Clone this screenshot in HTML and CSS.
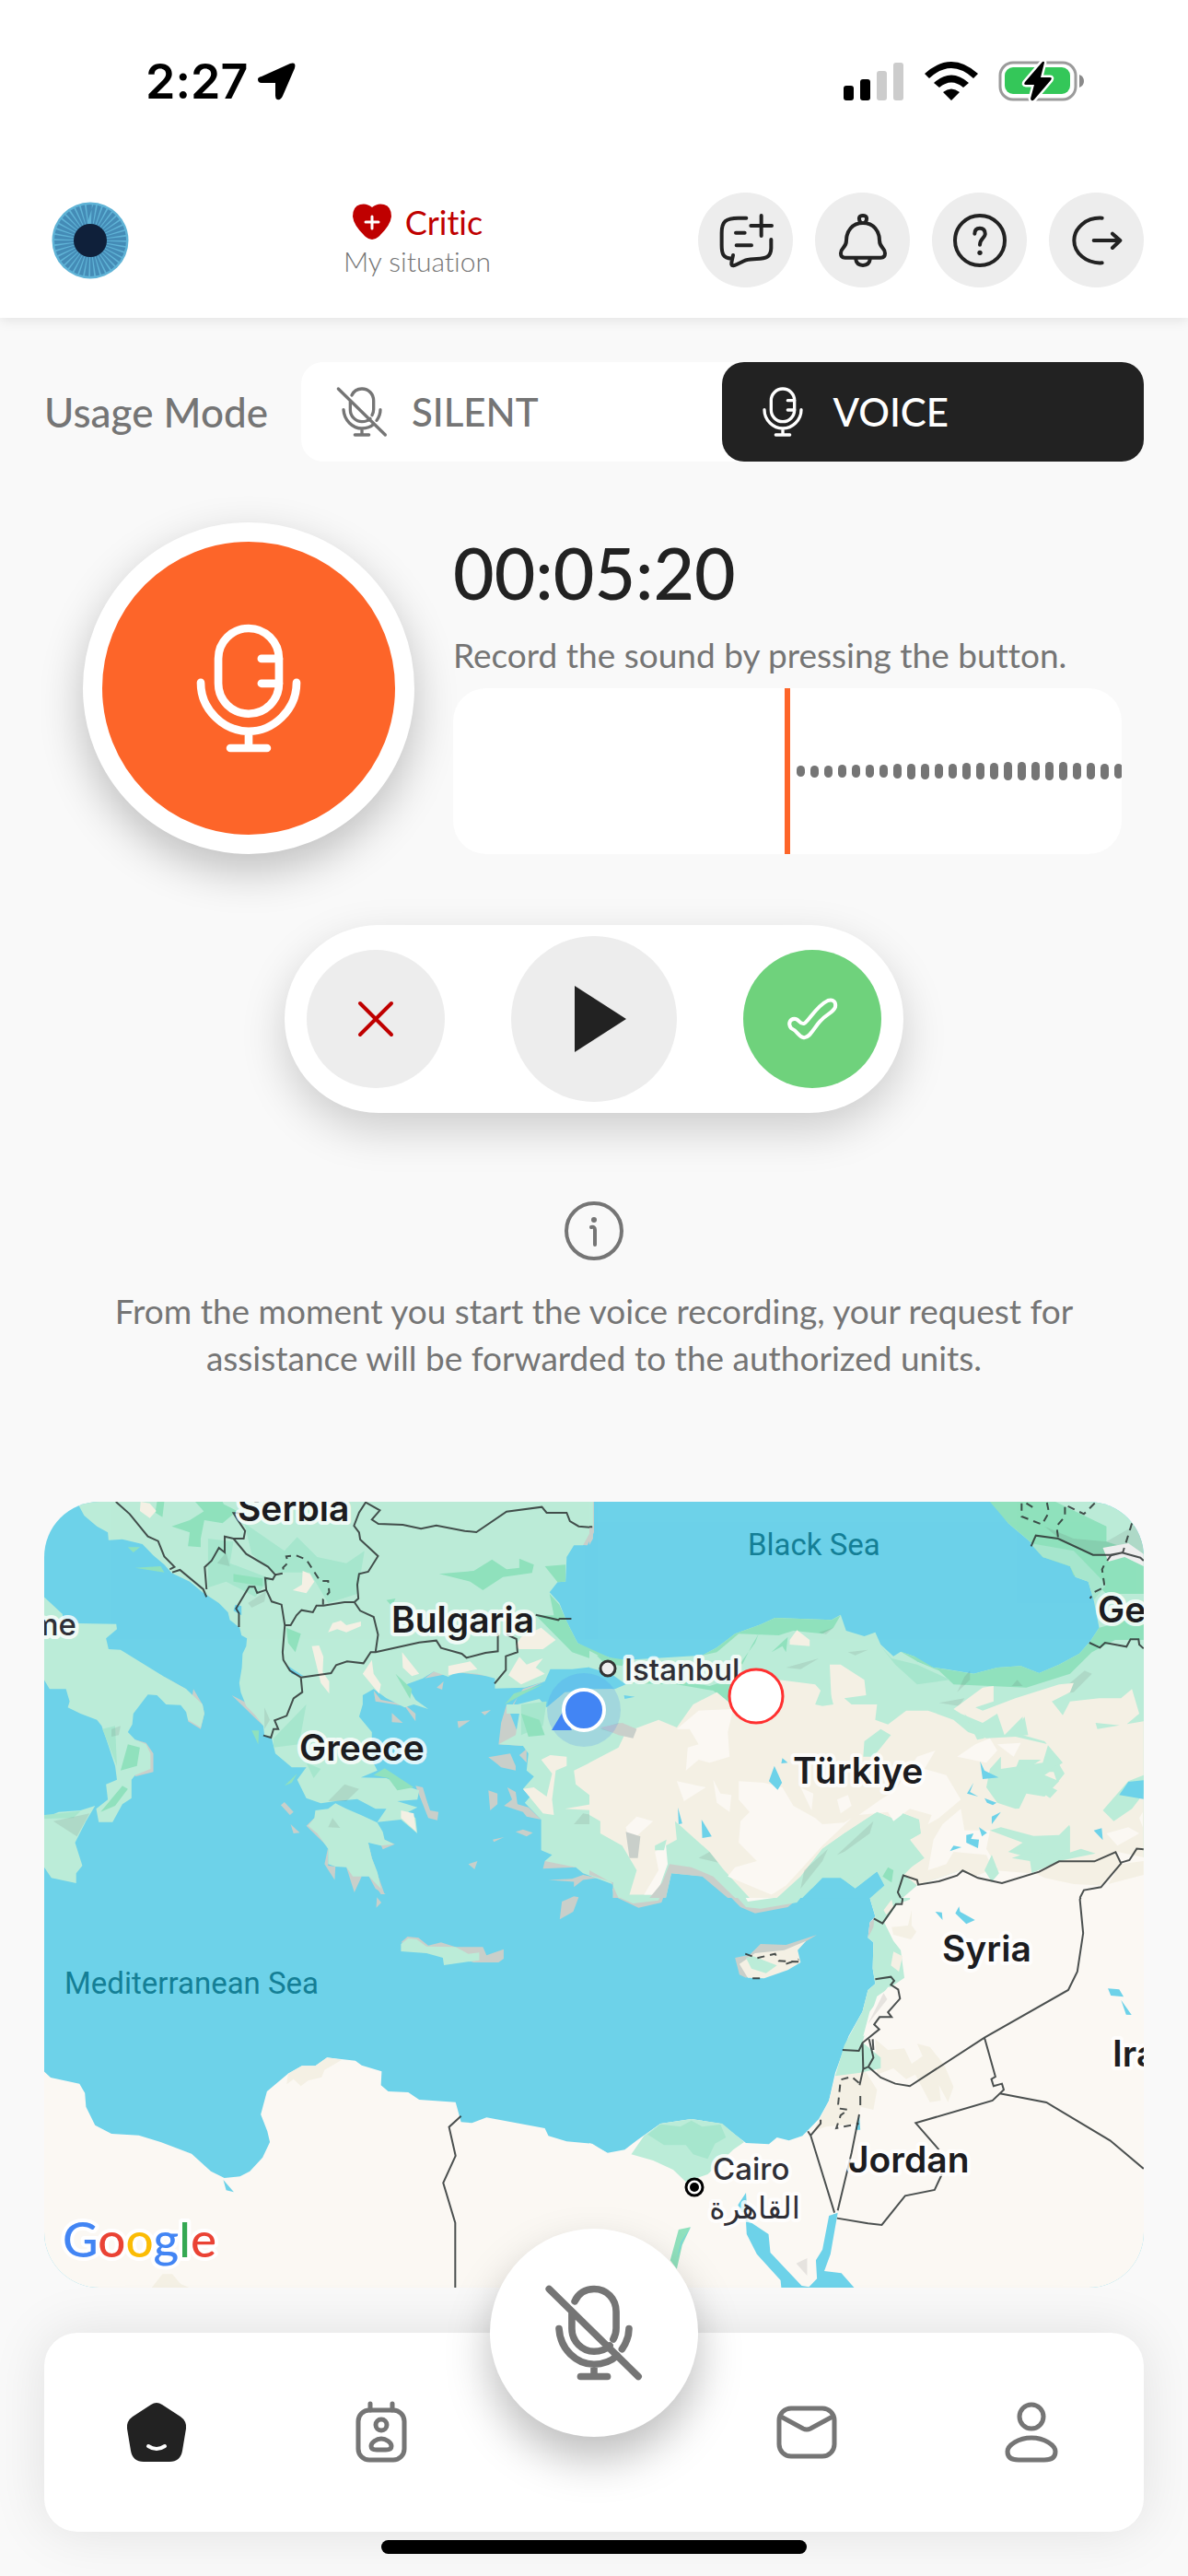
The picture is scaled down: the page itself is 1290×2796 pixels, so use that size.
FILE: index.html
```html
<!DOCTYPE html>
<html lang="en">
<head>
    <meta charset="UTF-8">
    <meta name="viewport" content="width=device-width, initial-scale=1.0">
    <title>Voice Mode</title>
    <link rel="stylesheet" href="styles.css">
</head>
<body>
    <!-- shared microphone icons -->
    <svg class="sprite" aria-hidden="true">
        <symbol id="mic" viewBox="-90 -90 180 180">
            <rect x="-38" y="-75" width="76" height="107" rx="38"/>
            <path d="M16-37H38M16-6H38M-60-7C-60 28-30 54 0 54S60 28 60-7M0 54V75M-23 75H23"/>
        </symbol>
        <symbol id="mic-off" viewBox="-90 -90 180 180">
            <path d="M-77-75L76 75M-33-54C-27-67-15-75 0-75C22-75 38-58 38-36V-8C38 0 36 6 33 11M-38-34V-7C-38 15-20 32 0 32C12 32 20 29 27 22M-60-7C-58 28-30 54 0 54C16 54 30 48 40 39M60-7C60 7 55 18 48 28M0 54V75M-23 75H23"/>
        </symbol>
    </svg>

    <div class="status-bar">
        <div class="status-left">
            <span class="time">2:27</span>
            <svg width="44" height="44" viewBox="0 0 44 44"><path d="M5 17L36 3Q43 1 41 8L28 38Q26 43 22 42Q20 41 20 38V24H5Q1 24 1 20Q1 18 5 17Z"/></svg>
        </div>
        <div class="status-right">
            <svg width="66" height="42" viewBox="0 0 66 42">
                <rect y="26" width="11" height="16" rx="3"/>
                <rect x="18" y="19" width="11" height="23" rx="3"/>
                <rect x="36" y="10" width="11" height="32" rx="3" fill="#ccc"/>
                <rect x="54" y="1" width="11" height="41" rx="3" fill="#ccc"/>
            </svg>
            <svg width="58" height="42" viewBox="0 0 58 42">
                <path d="M0 13Q29-13 58 13L53 18Q29-4 5 18ZM10 23Q29 6 48 23L42 28Q29 17 16 28ZM20 33Q29 26 38 33L29 42Z"/>
            </svg>
            <svg width="94" height="46" viewBox="0 0 94 46">
                <rect x="2" y="3" width="82" height="40" rx="14" fill="none" stroke="#9b9b9b" stroke-width="3"/>
                <path d="M88 16Q93 18 93 23T88 30Z" fill="#8a8a8a"/>
                <rect x="7" y="8" width="71" height="29" rx="9" fill="#34c759"/>
                <path d="M48 2L29 24Q27 27 30 27H39L35 42Q36 46 39 43L57 22Q59 19 56 19H46L50 3Q50 1 48 2Z" stroke="#fff" stroke-width="5" paint-order="stroke"/>
            </svg>
        </div>
    </div>

    <header>
        <a class="avatar" href="#" aria-label="Profile">
            <svg width="84" height="84" viewBox="-42 -42 84 84">
                <circle r="41.500" fill="#5fb3d6"/>
                <circle r="39" fill="#448bb6"/>
                <circle r="29" pathLength="40" fill="none" stroke="#5fb3d6" stroke-width="22" stroke-dasharray=".3 .7"/>
                <circle r="18" fill="#0f203a"/>
            </svg>
        </a>
        <div class="situation">
            <div class="level">
                <svg width="44" height="40" viewBox="0 0 44 40">
                    <path d="M22 4Q28-1 35 1Q43 3 43 14Q42 24 29 36Q22 42 15 36Q2 24 1 14Q1 3 9 1Q16-1 22 4Z" fill="#bf0000"/>
                    <path d="M22 14V27M15 20H29" stroke="#fff" stroke-width="3" stroke-linecap="round"/>
                </svg>
                <span>Critic</span>
            </div>
            <p>My situation</p>
        </div>
        <div class="actions">
            <button type="button" aria-label="New message">
                <svg class="icon" viewBox="-90 -90 180 180"><path d="M1-73H-25C-65-73-79-62-79-25V15C-79 43-75 57-47 59M-42 48C-44 60-48 70-47 78C-45 84-38 82-30 78L-5 66C5 60 15 61 35 60C65 59 81 55 82 25V-3M50-81V-15M16-48H84M-33-25H-4M-31 16H18"/></svg>
            </button>
            <button type="button" aria-label="Notifications">
                <svg class="icon" viewBox="-90 -90 180 180"><path d="M-8-59C-15-71-14-81 0-81S15-71 8-59M0-57C-35-57-54-30-54 0C-54 25-72 22-72 42C-72 52-68 56-58 56H58C68 56 72 52 72 42C72 22 54 25 54 0C54-30 35-57 0-57ZM-24 58C-22 74-12 81 0 81S22 74 24 58"/></svg>
            </button>
            <button type="button" aria-label="Help">
                <svg class="icon" viewBox="-90 -90 180 180"><circle r="81"/><path d="M-17-22C-17-34-10-40 0-40S18-34 17-20C15-7 0-5 0 14"/><circle class="dot" cy="40" r="8"/></svg>
            </button>
            <button type="button" aria-label="Log out">
                <svg class="icon" viewBox="-90 -90 180 180"><path d="M17-73C-35-76-74-40-74 0S-35 76 17 73M-10 0H75M51-22L76 0L51 24"/></svg>
            </button>
        </div>
    </header>

    <main>
        <div class="usage-mode" role="radiogroup" aria-labelledby="usage-label">
            <span class="usage-label" id="usage-label">Usage Mode</span>
            <div class="switch">
                <input type="radio" name="mode" id="silent">
                <label for="silent"><svg class="mode-icon"><use href="#mic-off"/></svg>SILENT</label>
                <input type="radio" name="mode" id="voice" checked>
                <label for="voice"><svg class="mode-icon"><use href="#mic"/></svg>VOICE</label>
            </div>
        </div>

        <section class="recorder">
            <button type="button" class="record" aria-label="Record">
                <svg class="record-icon"><use href="#mic"/></svg>
            </button>
            <div class="track">
                <p class="timer">00:05:20</p>
                <p class="hint">Record the sound by pressing the button.</p>
                <div class="wave">
                    <div class="bars">
                        <i style="height:12px"></i><i style="height:13px"></i><i style="height:13px"></i><i style="height:14px"></i>
                        <i style="height:14px"></i><i style="height:14px"></i><i style="height:14px"></i><i style="height:16px"></i>
                        <i style="height:17px"></i><i style="height:17px"></i><i style="height:16px"></i><i style="height:16px"></i>
                        <i style="height:18px"></i><i style="height:18px"></i><i style="height:18px"></i><i style="height:20px"></i>
                        <i style="height:20px"></i><i style="height:20px"></i><i style="height:20px"></i><i style="height:20px"></i>
                        <i style="height:18px"></i><i style="height:18px"></i><i style="height:17px"></i><i style="height:16px"></i>
                    </div>
                </div>
            </div>
        </section>

        <div class="controls">
            <button type="button" aria-label="Cancel">
                <svg width="42" height="42" viewBox="-21 -21 42 42"><path d="M-17-17L17 17M17-17L-17 17" stroke="#bf0000" stroke-width="4" stroke-linecap="round"/></svg>
            </button>
            <button type="button" class="play" aria-label="Play">
                <svg width="72" height="72" viewBox="-29 -36 72 72"><path d="M-14-36L42 0L-14 36Z" fill="#222"/></svg>
            </button>
            <button type="button" class="confirm" aria-label="Confirm">
                <svg width="60" height="60" viewBox="-30 -30 60 60"><path d="M-23 10C-27 5-24-1-18 0C-14 1-13 6-9 5C-4 3 4-14 17-20C23-22 26-18 25-13C23-7 15-5 9 2C2 9-3 22-10 20C-15 19-16 13-23 10Z" fill="none" stroke="#fff" stroke-width="4" stroke-linejoin="round"/></svg>
            </button>
        </div>

        <section class="info">
            <svg width="72" height="72" viewBox="-36 -36 72 72">
                <circle r="30" fill="none" stroke="#757575" stroke-width="4"/>
                <path d="M-3-4Q1-5 1-1V15" fill="none" stroke="#757575" stroke-width="4" stroke-linecap="round"/>
                <circle cy="-12" r="3" fill="#757575"/>
            </svg>
            <p>From the moment you start the voice recording, your request for assistance will be forwarded to the authorized units.</p>
        </section>

        <div class="map">
            <svg viewBox="0 0 1194 853" role="img" aria-label="Map">
                <rect width="1194" height="853" fill="#6dd2e9"/>

                <!-- south west: Libya, Egypt, Crete -->
                <g transform="translate(-8 420) scale(.3954 .3333)">
                    <path class="desert" d="M0 580L20 595L38 615L117 635L132 665L135 710L160 770L205 798L280 803L340 825L425 863L478 920L515 942L558 937L585 920L620 875L640 825L633 790L615 735L632 660L690 602L728 577H765L797 550L875 560L892 575L947 595L945 640L965 660L1020 663L1050 687L1150 695L1165 760L1195 763L1235 745L1395 780L1405 805L1455 823L1525 830L1568 862V1320H0Z"/>
                    <path class="sand" d="M690 602L728 577H765L797 550L838 557L790 590L782 614L745 625L725 643L705 620L686 637ZM315 1300L345 1255H372L395 1287L420 1300Z"/>
                    <path class="water" d="M512 948L541 988L520 982Z"/>
                    <path class="rock" d="M1000 175L1018 156L1048 160L1075 185L1110 175L1150 190H1225L1235 217L1282 197V228L1268 240H1200L1150 225ZM1442 42L1475 25L1488 28L1473 75L1436 100ZM934 28L946 45L932 62ZM935 0L958 18L945 18Z"/>
                    <path class="green" d="M1000 180L1020 162L1043 165L1070 188L1150 190L1185 212L1215 208V233L1118 249L1115 225L1070 210L1000 204Z"/>
                    <path class="border" d="M1165 740L1132 776L1150 870L1116 958L1149 1088V1300"/>
                </g>

                <!-- south east: Levant, Sinai, Cyprus -->
                <g transform="translate(592 420) scale(.3954 .3333)">
                    <path class="desert" d="M780 0H1568V1320H0V828L50 860L97 850L130 820L195 765L280 750L360 765L430 828L493 832L515 810L548 820L585 805L630 750L658 690L675 600L712 480L750 400L765 330L785 310L778 260L780 175L765 160L770 110L785 90L775 50L770 30Z"/>
                    <path class="sand" d="M675 610L750 580L790 655L780 720L745 710L735 765L650 775L615 790L658 690ZM785 490L820 525L865 520L885 570L915 545L900 505L935 515L975 575L1000 645L985 695L960 640L965 690L935 695L895 605L870 620L835 585L790 605Z"/>
                    <path class="green" d="M115 865L150 805L195 765L280 750L365 765L425 825L395 850L325 930L265 955L230 915L175 885ZM770 30L785 0H885L880 35L845 50L810 110L835 170L855 200L865 290L790 350L765 440L750 500L800 550V585L740 600L675 610L700 510L750 400L765 330L785 310L778 260L780 175L765 160L785 90Z"/>
                    <path class="mid" d="M160 800L195 767L250 775L280 755L310 775L360 768L375 810L345 830L325 880L285 865L265 835H205Z"/>
                    <path class="leaf" d="M245 1110L278 1102L255 1160L240 1238L222 1210Z"/>
                    <path class="desert" d="M820 320L850 320L850 355L825 390L825 415L795 430L795 460L752 480L770 400Z"/>
                    <path class="sand" d="M835 205L860 220L850 270L828 250ZM830 125L875 120L885 70V120L898 140L883 165L835 150ZM830 35L835 60L815 85L808 70Z"/>
                    <path class="rock" d="M63 0L68 25L135 62L198 45L212 0ZM365 0L415 60L455 80L545 60L605 0ZM400 225L440 215L470 180L540 183L625 150L590 175L430 290L412 280ZM770 110L783 95L780 125L765 160Z"/>
                    <path class="green" d="M78 0L85 30L120 48L190 38L200 0ZM385 0L430 60L470 65L570 45L600 0Z"/>
                    <path class="desert" d="M148 0L165 25L188 0ZM415 0L435 42L520 28L530 0Z"/>
                    <path class="sand" d="M412 245L455 210L535 200L595 170L572 200L580 240L545 265L480 292L435 290Z"/>
                    <path class="green" d="M430 225L450 220L515 250L485 275L445 260Z"/>
                    <path class="water" d="M430 990L435 1080L492 1125L497 1185L583 1293L603 1297L625 1270L622 1210L640 1175L658 1065L682 1055L662 1190L645 1245L692 1252L727 1299H527L525 1275L460 1190L432 1125L430 1085L408 1030ZM950 75L968 77L970 102ZM1015 58L1018 75L1059 102L1035 115L1005 80ZM1424 325L1455 328L1467 352L1432 348ZM1460 362L1489 411L1474 410ZM741 735L744 785H730ZM280 1100L255 1150L240 1205L252 1150Z"/>
                    <path class="shade" d="M808 340L818 360L765 440ZM568 1220L598 1203V1260Z"/>
                    <path class="border" d="M848 0L860 35L858 50H842L805 113L781 97M785 295L828 287L837 300L828 313L848 328L853 358L820 402L830 418H797L782 442L796 458L750 502L740 528L695 525M768 490L780 550L766 580L752 587L750 502M778 490L780 525M766 580L800 615L840 635L880 643L1085 485L1315 330L1340 270L1356 145L1347 35L1358 5L1400 0M1085 485L1115 612L1104 620L1110 643L1133 635L1138 655L1107 690L896 763L960 850M968 930L948 981L867 1000L803 1095L765 1090L680 1073M1127 667L1255 696L1430 820L1522 912M752 587L742 640M744 675V705M741 735L720 860L682 1048M600 790L608 805L673 1055M608 803L635 765V752"/>
                    <path class="border dash" d="M740 632L720 612L690 622L682 715L710 720L690 738L678 780L740 765M428 212L460 226L510 212L520 235L580 238M540 245L575 230M448 292H475"/>
                </g>

                <!-- north west: Balkans, Italy, Aegean -->
                <g transform="translate(-8 -10) scale(.3954 .3333)">
                    <path class="rock" d="M535 660L600 735L650 790L600 700ZM430 640L455 690L460 720L450 770L415 745ZM270 805L300 815L320 850V910L270 925ZM350 600L410 640L440 690L380 650ZM955 685L930 680L925 645L945 675L1010 690L1040 720V745L1010 695ZM975 718L1005 750L975 748ZM1155 745L1190 742L1158 767ZM1220 715L1247 708L1230 725ZM1098 635L1117 615L1113 642ZM1240 862L1300 850L1315 890V905L1275 895L1260 880ZM1240 970L1265 980V1015L1245 1035ZM1292 960L1315 975L1320 1015L1350 1025L1385 1065L1345 1055L1335 1040L1283 1020L1305 1000ZM1040 955L1060 960L1070 1000L1080 1035L1103 1040L1100 1067L1075 1060ZM670 1018L680 1008L705 1040L695 1050ZM697 1080L722 1108L705 1110ZM1185 1210L1210 1200L1202 1227ZM1252 1130L1283 1122L1255 1138ZM1315 1105L1335 1097L1362 1108L1345 1120ZM1405 1262L1470 1258L1500 1245L1540 1255L1500 1262L1475 1285V1268ZM1325 855L1345 835V880ZM740 1085L762 1060L800 1160V1215L820 1218L818 1262L790 1210L800 1155ZM850 1220L892 1250L872 1302ZM912 1250L910 1140L920 1190L955 1308L930 1290ZM935 1120L983 1145L950 1162ZM1090 583L1065 605L1130 590L1140 570L1255 600L1150 585ZM1395 615L1325 655L1300 715L1290 720L1335 640ZM1290 690L1275 750L1268 820L1335 825ZM1470 0H1530V130L1512 172L1490 170ZM1395 1200L1390 1225L1480 1220L1440 1190Z"/>
                    <path class="green" d="M90 0L115 42L130 75L165 110L195 130L197 155L235 152L290 168L320 205L350 235L370 262L420 290L455 325L500 360L525 390L530 415L557 440L562 465L577 475L575 500L565 525L563 570L556 620L560 650L575 695L600 725L622 760L625 790L645 800L655 850L700 895H740L715 935L740 995L780 1012L820 1005L880 998L930 1030L960 1030L935 1073L1000 1065L1045 1110L1040 1060L1020 1040L1045 1025L990 1005L1045 1000L1050 970L1000 950L960 930L890 928L935 905L920 870V780L885 730L895 690V660L925 640L960 670L1010 700L1035 690L1075 705L1040 675L1015 625L1060 605L1090 583L1130 600L1150 585L1210 590L1258 605V638L1340 635L1395 615L1410 575L1470 575L1580 560V540L1520 515L1485 490L1455 420L1435 360L1408 325L1430 292L1452 290L1455 210L1475 172H1500L1528 110V0Z"/>
                    <path class="green" d="M765 1035L800 1030L820 1012L850 1030L890 1050L935 1075L950 1105L955 1130L980 1145L945 1150L910 1140L920 1190L935 1235L945 1290L912 1250L890 1250H868L850 1220L820 1218L800 1210V1160L770 1110L745 1085L762 1060Z"/>
                    <path class="green" d="M20 340L70 395L75 425L218 428L220 445L190 475L197 510L230 512L350 600L410 640L455 690L460 720L450 765L415 740L410 715L395 692L355 690L330 660L305 658L265 720L262 755L250 780L270 805L300 820L312 850V900L270 920L260 935V995L235 1015L208 1073H170L163 1030L195 1000L190 950L220 935L215 890L190 800L178 760L165 740L120 720L85 700L90 680L80 640H35L20 610ZM20 1060L60 1040L120 1035L160 1020L135 1070L105 1140L125 1215L108 1240V1272L40 1255L20 1220Z"/>
                    <path class="green" d="M1290 690L1320 690L1380 672L1400 700L1450 650L1580 640V1275L1500 1240L1480 1220L1395 1200L1415 1180L1385 1165V1065L1340 1010L1355 990L1335 965L1365 925L1345 905L1350 850L1335 825L1268 820L1315 790L1325 720L1290 720Z"/>
                    <path class="mid" d="M570 100L680 190L715 145L770 210L850 230L900 190L880 330L800 360L750 260L650 260L590 200ZM470 150L540 160L530 230L640 280L600 340L520 290L470 310ZM650 800L740 690L720 820L650 830ZM180 770L215 760L220 890ZM20 1050L120 1037L100 1060L20 1062ZM740 880L780 900L760 930ZM1330 690L1400 680L1390 760L1330 790Z"/>
                    <path class="leaf" d="M370 110L420 90L500 30L550 60L510 100L460 90L450 150V178L415 175L420 130ZM330 30H350L345 80L325 65ZM435 30H510L530 75L480 90ZM1105 265L1200 255L1250 218L1290 250L1325 245V215L1365 235L1360 262L1280 275L1225 318L1190 290ZM1395 240L1452 235V290L1430 292ZM1408 330L1435 365L1455 420L1485 490L1568 535V560L1470 520L1370 400L1420 400ZM250 820L283 830L275 890L230 905ZM235 955L250 965L215 1020L175 1040ZM925 920L955 898L1035 960L990 970L965 930ZM685 440L725 460L710 520L690 490ZM540 265L620 280V305L540 290ZM680 955L715 915L700 945ZM985 590L1030 640L1025 672ZM1330 720L1380 740L1395 790L1350 795ZM590 775L610 775L608 820ZM270 245L340 240L350 260ZM250 178H283L265 195ZM1285 690L1310 655L1390 625L1330 660ZM960 350L985 345L975 370Z"/>
                    <path class="sand" d="M285 30L310 35L328 60L310 83L283 60ZM730 255L750 265L762 290L740 328L703 318L728 300ZM800 455L812 425L835 417L850 432L890 420V435L850 455L825 445ZM755 500L775 498L787 535L785 585L803 615V655L780 620ZM895 590L920 545L925 590L945 625L940 655ZM1003 520L1050 590L1030 598L1005 570ZM1130 565L1190 550L1210 575L1130 595ZM1315 500L1330 470L1385 440L1425 480L1390 510H1325ZM1295 595L1325 535L1345 560L1390 540L1370 570L1395 590L1330 625ZM1000 1035L1035 1045L1042 1105L1000 1060ZM1385 870L1410 855L1455 860V890L1425 905L1415 1000L1420 1050L1390 1045L1335 965L1365 960L1400 990L1415 915ZM1475 905L1510 885L1568 850V1125L1545 1120L1530 1035L1450 1030L1545 1010L1480 950Z"/>
                    <path class="shade" d="M580 360L630 320L625 355L590 375ZM45 1070L145 1045L110 1120ZM800 1005L845 950L885 965L850 1005ZM495 230L520 195L530 240ZM800 1090L812 1060L833 1092ZM1475 1080L1500 1045L1550 1055V1080ZM625 700L640 740L625 770ZM205 770L230 760L225 790L205 795Z"/>
                    <path class="water" d="M545 365L562 370V400L540 385ZM1090 30L1108 76L1098 50ZM690 565L735 600L700 590Z"/>
                    <path class="border" d="M217 30L255 70L305 143L333 158L350 208L378 242L365 250M372 260L393 252L457 315L466 340M466 315L461 243L480 222L500 180L516 195V143L540 150H568L572 125L552 90L540 67H555M540 150L575 200L635 242L655 268L648 283L627 278L630 317L605 327L598 307H583L547 378L555 393V438M630 317L645 355L672 365L681 432L675 520L677 545L695 580L725 602L729 650L705 670L686 727L653 742L663 770H650L643 798L622 791M725 602L808 588L822 562L852 550L897 556L917 520H930L937 463L925 405L888 385L872 357L845 357L787 368L768 368L758 390L727 383L713 400L697 432H681M872 357L883 345L880 300L885 265L910 258L937 207L888 153L885 130L871 108L885 65L903 32L942 58L920 88L938 102L1005 105L1055 118L1097 107L1175 125L1207 129L1290 62L1387 47L1400 66H1455L1464 93L1488 110L1527 114M930 520L1050 488L1097 482L1110 506L1167 525L1180 538L1232 522L1266 517V458M1290 462L1317 477L1320 520L1288 533V578L1257 622M1370 398L1432 415L1436 411H1468"/>
                    <path class="border dash" d="M655 268L680 262L676 245L690 228L685 208L710 204L740 218L778 288H800L803 325L786 348V365"/>
                </g>

                <!-- north east: Anatolia, Caucasus -->
                <g transform="translate(592 -10) scale(.3954 .3333)">
                    <path class="green" d="M0 515L40 540L100 545L310 530L350 505L400 460L470 430L510 408L665 415L690 398L705 450L755 468L785 455L800 495L835 533L855 518L895 535L900 550L945 570L980 575L1055 590L1120 570L1185 565L1235 588L1290 560L1345 525L1375 485L1400 440L1385 350L1370 290L1335 275L1320 240L1290 225L1245 210L1240 185L1210 160L1150 100L1090 0H1568V1320H770L810 1280L790 1235L730 1290L690 1255H640L585 1320H400L320 1250L225 1240L210 1320H65V1270L0 1245V640L70 640L100 625L60 590L0 570ZM0 0H10V120L0 170Z"/>
                    <path class="leaf" d="M310 530L350 505L400 460L470 430L510 408L665 415L690 400L670 440L640 460L560 450L520 465L410 460L350 520ZM100 620L200 605L330 630L410 600L390 690L340 645L240 625ZM20 530L100 545L90 565L40 555ZM415 555L455 490L465 460L445 500L420 560ZM500 520L545 470L540 520L530 500ZM855 518L895 535L945 570L1055 590L1120 570L1185 565L1235 588L1290 560L1345 525L1375 485L1400 440L1460 470L1380 520L1320 590L1200 635L1000 625L960 580L900 550ZM1100 30H1280L1420 110L1420 160L1522 200V330L1420 330L1385 290L1330 270L1320 240L1245 210L1210 160L1150 100ZM1400 440L1522 400V480L1410 480Z"/>
                    <path class="mid" d="M1210 165L1330 190L1420 300L1385 350L1370 290L1335 275L1320 240L1245 210ZM800 500L830 540L900 560L990 610L900 625L840 560Z"/>
                    <path class="shade" d="M1250 110L1330 150L1420 160L1522 90V200L1440 200L1380 205L1290 150ZM960 685L1030 670L1015 695ZM1030 600L1045 580V610L1010 650ZM1270 660L1320 620L1360 580L1380 590L1330 650ZM540 570L630 540L580 575ZM300 1190L330 1170L370 1210ZM30 770L80 750L130 770L120 800ZM1175 610L1190 630L1160 630ZM710 520L765 512L730 530ZM630 455L670 440L650 462Z"/>
                    <path class="sand" d="M0 880L80 830L100 780L190 740L240 765L285 690L350 650L400 700L520 610L620 625L665 685L660 560L690 560L755 610L760 660L700 670L720 690L790 690L785 740L820 755L870 710L930 710L1000 740L1040 780L1090 800L1170 795L1260 820L1245 880L1130 900L1130 860L1100 900L1090 960L1120 1010L1170 1030L1300 1020L1320 1080L1290 1115L1220 1118L1130 1090L1100 1100L1190 1140L1150 1170L1240 1200L1220 1235L1140 1270L1060 1250L1020 1230L900 1280L860 1240L920 1190L880 1130L910 1110L905 1065L860 1045L830 1060L790 1040L700 1110L640 1160L580 1250L515 1320H440L370 1230L330 1170L250 1085L235 1070L240 1130L210 1150L205 1220L180 1310H110L130 1230L90 1150L30 1110L30 1070L0 1050ZM1000 705L1080 635L1110 630V680L1060 700L1080 710L1170 670L1290 625L1330 620L1320 650L1270 680L1300 725L1320 680L1400 670L1460 670L1490 640L1510 720L1470 760L1390 750L1395 770L1522 745V920L1480 940L1450 980L1410 1035L1440 1070L1490 1030L1522 980V1320H1200L1220 1190L1320 1180L1320 1090L1300 1020L1180 1030L1200 980L1250 990L1290 940L1250 920L1300 880L1250 810L1190 790L1190 730L1140 790L1120 720L1080 750L1020 720ZM550 480L570 448L605 480V500L550 495Z"/>
                    <path class="desert" d="M240 770L300 710L395 705L380 780L385 860L330 880L300 870L265 905L270 830L300 820L275 770ZM240 940L320 960L260 1005ZM340 935L360 980L390 985L385 1040L350 1010ZM410 940L480 945L530 960L560 1020L620 1060L640 1080L700 1075L720 1060L640 1150L540 1280L500 1310L380 1250L400 1220L460 1200L410 1140L415 1070L440 1040L410 1000ZM580 960L615 980L610 1035ZM680 1000L710 985L720 1020L690 1045ZM740 1050L800 1000L840 970L900 860L950 840L920 900L980 920L1020 1000L960 1060L930 1080L940 1050L880 1030L835 1070L820 1040ZM1010 860L1060 820L1100 800L1120 840L1090 880ZM1120 820L1185 815L1165 860ZM970 1080L1020 1030L1030 1100L1100 1100L1090 1160L1120 1220L1060 1250L1020 1230L900 1280L860 1320H1568V1200L1450 1170L1390 1200H1290L1210 1240L1110 1230L1090 1180L1000 1170L980 1210L930 1230L945 1130ZM100 1090L130 1055L175 1070L110 1140ZM180 1170L210 1145L215 1210L185 1310L150 1310L190 1230ZM1420 1110L1480 1090L1510 1110L1450 1150ZM1520 1040V1090L1510 1060Z"/>
                    <path class="green" d="M620 690L650 600L670 690L640 695ZM755 810L800 770L828 790L780 860H752ZM1170 900L1180 870L1240 870L1190 910ZM1245 910L1290 885L1305 915L1285 945L1275 910ZM1235 940L1285 970L1265 995L1235 970ZM1085 1230L1105 1180L1125 1240L1105 1268ZM1160 1190L1210 1170L1300 1180L1350 1160L1390 1175L1290 1200L1215 1240L1210 1200ZM180 1150L212 1130L205 1165L180 1165ZM1030 720L1085 800L1065 805ZM1195 730L1205 790L1160 795ZM640 1160L700 1110L790 1040L830 1060L840 1100L860 1045L905 1065L910 1110L880 1130L900 1200L860 1250L790 1320H770L810 1280L790 1235L700 1260L580 1300L600 1220Z"/>
                    <path class="shade" d="M680 1180L780 1070L770 1110L700 1170ZM590 1230L655 1160L640 1200L580 1290Z"/>
                    <path class="leaf" d="M805 1250L820 1220L835 1230L830 1270Z"/>
                    <path class="rock" d="M100 1105L140 1120L133 1190H110ZM30 765L90 750L130 770L120 800L80 790ZM220 1210L280 1220L340 1250L400 1320H380L310 1250L225 1240L210 1320H165L200 1270ZM0 1230L60 1270L80 1320H65V1270L0 1245ZM0 110H10V150L0 170Z"/>
                    <path class="snow" d="M1410 180L1480 165L1522 200V240L1470 210L1425 225Z"/>
                    <path class="desert" d="M1390 1250L1470 1200L1522 1190V1320H1350Z"/>
                    <path class="sand" d="M1225 1240L1290 1203L1390 1200L1445 1175L1458 1210L1405 1280L1330 1275L1250 1255ZM1458 1210L1522 1200V1245L1425 1275Z"/>
                    <path class="water" d="M585 1322L640 1255H690L730 1290L790 1235L810 1280L770 1322ZM508 890L529 945L517 968L493 940ZM530 865L545 880L527 882ZM243 1025L255 1078L245 1080ZM308 1065L336 1120L310 1125ZM1073 875L1085 905L1124 928L1080 933ZM1055 945L1045 975L1068 990L1037 980ZM1085 995L1118 1010L1108 1018L1092 1010ZM1130 1040L1105 1080V1055ZM1070 1090L1092 1108L1078 1120ZM1035 1115L1055 1110L1048 1128L1070 1130L1067 1158L1035 1140ZM1000 1150L1022 1155L990 1168ZM1455 985L1480 942L1522 937V998ZM1385 1100L1407 1093L1410 1132ZM95 660L125 665L97 672Z"/>
                    <path class="border" d="M1213 175L1226 140L1287 150L1383 203H1430L1463 196L1513 212L1522 222M1463 196L1432 205L1422 222M1373 489L1402 505L1416 489L1475 502L1486 478H1508L1510 495L1522 508M0 112H8M855 1320L847 1302L862 1247L900 1262L903 1277L960 1266L1010 1247L1025 1231L1067 1255L1133 1272L1235 1235L1290 1201H1387L1445 1171L1460 1208L1405 1285L1358 1295L1347 1320M1460 1205L1483 1197L1503 1160L1522 1162"/>
                    <path class="border dash" d="M1187 35V78L1243 104L1262 65L1256 30M1287 145L1283 110L1306 78V40L1358 70L1390 32M1413 238L1408 250L1415 308L1385 325L1375 345M1490 100L1465 195M1200 35L1220 50"/>
                </g>

                <g class="country">
                    <text x="210" y="21">Serbia</text>
                    <text x="377" y="142">Bulgaria</text>
                    <text x="277" y="281">Greece</text>
                    <text x="813" y="306">Türkiye</text>
                    <text x="975" y="499">Syria</text>
                    <text x="873" y="728">Jordan</text>
                    <text x="1160" y="613">Iraq</text>
                    <text x="1144" y="131">Georgia</text>
                </g>
                <g class="city">
                    <text x="35" y="145" text-anchor="end">Rome</text>
                    <text x="630" y="194">Istanbul</text>
                    <text x="726" y="736">Cairo</text>
                    <text x="821" y="778" direction="rtl">القاهرة</text>
                </g>
                <g class="sea">
                    <text x="764" y="58">Black Sea</text>
                    <text x="22" y="534">Mediterranean Sea</text>
                </g>
                <circle cx="612" cy="181" r="8" fill="#eee" stroke="#333" stroke-width="3"/>
                <circle cx="706" cy="744" r="9" fill="#fff" stroke="#000" stroke-width="3"/>
                <circle cx="706" cy="744" r="5"/>

                <!-- pins -->
                <circle cx="586" cy="226" r="40" fill="#4285f4" opacity=".2"/>
                <path d="M551 248L563 228L573 248Z" fill="#4285f4"/>
                <circle cx="586" cy="226" r="22" fill="#4285f4" stroke="#fff" stroke-width="4"/>
                <circle cx="773" cy="211" r="29" fill="#fff" stroke="#ff3030" stroke-width="3"/>

                <text class="brand" x="20" y="820"><tspan fill="#4285f4">G</tspan><tspan fill="#ea4335">o</tspan><tspan fill="#fbbc05">o</tspan><tspan fill="#4285f4">g</tspan><tspan fill="#34a853">l</tspan><tspan fill="#ea4335">e</tspan></text>
            </svg>
        </div>
    </main>

    <nav class="tab-bar">
        <a href="#" aria-label="Home">
            <svg width="72" height="72" viewBox="-36 -36 72 72"><path d="M-6-30Q0-34 6-30L26-17Q33-12 32-4L28 20Q26 32 14 32H-14Q-26 32-28 20L-32-4Q-33-12-26-17Z" fill="#222"/><path d="M-9 15Q0 21 9 15" fill="none" stroke="#fff" stroke-width="4" stroke-linecap="round"/></svg>
        </a>
        <a href="#" aria-label="Contacts">
            <svg class="tab-icon" viewBox="-36 -36 72 72"><rect x="-25" y="-24" width="50" height="54" rx="12"/><path d="M-12-31V-24M12-31V-24M0 7C-5 7-11 11-11 15Q-11 19-5 19H5Q11 19 11 15C11 11 5 7 0 7Z"/><circle cy="-8" r="6"/></svg>
        </a>
        <button type="button" class="mute" aria-label="Silent mode">
            <svg class="mute-icon"><use href="#mic-off"/></svg>
        </button>
        <a href="#" aria-label="Messages">
            <svg class="tab-icon" viewBox="-36 -36 72 72"><rect x="-30" y="-26" width="60" height="52" rx="13"/><path d="M-28-17L-4-4Q0-2 4-4L28-17"/></svg>
        </a>
        <a href="#" aria-label="Account">
            <svg class="tab-icon" viewBox="-36 -36 72 72"><circle cy="-17" r="13"/><path d="M0 6C14 6 26 14 26 21Q26 30 14 30H-14Q-26 30-26 21C-26 14-14 6 0 6Z"/></svg>
        </a>
    </nav>
    <div class="home-indicator"></div>
</body>
</html>
```

FILE: styles.css
```css
* {
    margin: 0;
    padding: 0;
    box-sizing: border-box;
}

body {
    font-family: Lato, "Open Sans", sans-serif;
    font-variant-ligatures: none;
    background-color: #f9f9f9;
    color: #757575;
    display: flex;
    flex-direction: column;
    min-height: 100vh;
}

svg {
    display: block;
    flex-shrink: 0;
}

button {
    border: none;
    border-radius: 50%;
    background-color: #ededed;
    display: flex;
    justify-content: center;
    align-items: center;
    flex-shrink: 0;
    cursor: pointer;
}

.sprite {
    position: absolute;
    width: 0;
    height: 0;
}

/* Status bar */
.status-bar {
    position: relative;
    z-index: 1;
    display: flex;
    justify-content: space-between;
    align-items: center;
    height: 176px;
    padding: 0 112px 0 158px;
    background-color: white;
}

.status-left,
.status-right {
    display: flex;
    align-items: center;
    color: black;
}

.status-left {
    gap: 10px;
}

.status-right {
    gap: 22px;
}

.time {
    font-family: Inter, sans-serif;
    font-size: 52px;
    font-weight: 600;
}

/* Header */
header {
    display: flex;
    justify-content: space-between;
    align-items: center;
    padding: 33px 48px;
    background-color: white;
    box-shadow: 0 4px 12px rgba(0, 0, 0, 0.08);
}

.avatar {
    padding: 0 8px;
}

.situation {
    display: flex;
    flex-direction: column;
    align-items: center;
}

.level {
    display: flex;
    align-items: center;
    gap: 14px;
    font-size: 36px;
    line-height: 44px;
    color: #bf0000;
}

.situation p {
    font-size: 30px;
    line-height: 40px;
    font-weight: 300;
}

.actions {
    display: flex;
    gap: 24px;
}

.actions button {
    width: 103px;
    height: 103px;
}

.icon {
    width: 60px;
    height: 60px;
    fill: none;
    stroke: #222;
    stroke-width: 12;
    stroke-linecap: round;
    stroke-linejoin: round;
}

.icon .dot {
    fill: #222;
    stroke: none;
}

main {
    padding: 48px;
}

/* Usage mode */
.usage-mode {
    display: flex;
    align-items: center;
    gap: 36px;
}

.usage-label {
    font-size: 44px;
    font-weight: 500;
    white-space: nowrap;
}

.switch {
    display: flex;
    flex: 1;
    background-color: white;
    border-radius: 24px;
}

.switch input {
    position: absolute;
    opacity: 0;
}

.switch label {
    display: flex;
    align-items: center;
    flex: 1;
    gap: 24px;
    height: 108px;
    padding: 0 36px;
    border-radius: 24px;
    font-size: 42px;
    font-weight: 500;
    cursor: pointer;
}

.switch input:checked + label {
    background-color: #222;
    color: white;
}

.mode-icon,
.record-icon,
.mute-icon {
    width: 60px;
    height: 60px;
    fill: none;
    stroke: currentColor;
    stroke-width: 10;
    stroke-linecap: round;
}

/* Recorder */
.recorder {
    display: flex;
    gap: 42px;
    margin-top: 66px;
    padding: 0 24px 0 42px;
}

.record {
    width: 360px;
    height: 360px;
    border: 21px solid white;
    background-color: #fd6529;
    color: white;
    box-shadow: 0 18px 48px rgba(0, 0, 0, 0.24);
}

.record-icon {
    width: 156px;
    height: 156px;
}

.track {
    flex: 1;
    min-width: 0;
    padding-top: 12px;
}

.timer {
    font-size: 77px;
    font-weight: 500;
    line-height: 84px;
    color: #222;
}

.hint {
    margin: 24px 0 12px;
    font-size: 37px;
    line-height: 48px;
    white-space: nowrap;
}

.wave {
    height: 180px;
    border-radius: 36px;
    background-color: white;
    overflow: hidden;
}

.bars {
    display: flex;
    align-items: center;
    gap: 6px;
    height: 100%;
    margin-left: calc(50% - 3px);
    padding-left: 7px;
    border-left: 6px solid #fd6529;
    overflow: hidden;
}

.bars i {
    width: 9px;
    flex-shrink: 0;
    border-radius: 5px;
    background-color: #757575;
}

/* Playback controls */
.controls {
    display: flex;
    justify-content: space-between;
    align-items: center;
    width: 672px;
    height: 204px;
    max-width: 100%;
    margin: 77px auto 0;
    padding: 0 24px;
    border-radius: 102px;
    background-color: white;
    box-shadow: 0 18px 48px rgba(0, 0, 0, 0.18);
}

.controls button {
    width: 150px;
    height: 150px;
}

.controls .play {
    width: 180px;
    height: 180px;
}

.controls .confirm {
    background-color: #6fd27c;
}

.info {
    display: flex;
    flex-direction: column;
    align-items: center;
    gap: 25px;
    margin-top: 92px;
    padding: 0 48px;
    text-align: center;
}

.info p {
    font-size: 37px;
    line-height: 51px;
}

/* Map */
.map {
    margin-top: 131px;
    border-radius: 60px;
    overflow: hidden;
}

.map svg {
    width: 100%;
    height: auto;
}

.green { fill: #bbecd8; }
.mid { fill: #a6e6cd; }
.leaf { fill: #90e1bd; }
.sand { fill: #f4f0e4; }
.desert { fill: #fbf8f3; }
.rock { fill: #c9cfca; }
.snow { fill: #eeeeee; }
.water { fill: #6dd2e9; }
.shade { fill: #555555; opacity: 0.12; }

.border {
    fill: none;
    stroke: #2d3333;
    stroke-width: 2;
    opacity: 0.85;
    vector-effect: non-scaling-stroke;
}

.dash {
    stroke-dasharray: 8 6;
}

.country,
.city {
    font-family: Inter, "DejaVu Sans", sans-serif;
    font-size: 39px;
    font-weight: 600;
    fill: #1c1c20;
    stroke: rgba(255, 255, 255, 0.8);
    stroke-width: 8;
    stroke-linejoin: round;
    paint-order: stroke;
}

.city {
    font-size: 33px;
    font-weight: 500;
    fill: #2f2f36;
}

.sea {
    font-family: Roboto, sans-serif;
    font-size: 33px;
    fill: #147f96;
}

.brand {
    font-size: 53px;
    font-weight: 500;
    stroke: white;
    stroke-width: 8;
    stroke-linejoin: round;
    paint-order: stroke;
}

/* Bottom tab bar */
.tab-bar {
    display: grid;
    grid-template-columns: 1fr 1fr 218px 1fr 1fr;
    align-items: center;
    justify-items: center;
    height: 216px;
    margin: 1px 48px 0;
    border-radius: 36px;
    background-color: white;
    box-shadow: 0 0 60px rgba(0, 0, 0, 0.1);
}

.tab-icon {
    width: 72px;
    height: 72px;
    fill: none;
    stroke: #757575;
    stroke-width: 5;
    stroke-linecap: round;
    stroke-linejoin: round;
}

/* centred on the top edge of the bar */
.mute {
    width: 226px;
    height: 226px;
    margin-top: -216px;
    background-color: white;
    color: #757575;
    box-shadow: 0 24px 48px rgba(0, 0, 0, 0.26);
}

.mute-icon {
    width: 114px;
    height: 114px;
    stroke-width: 12;
}

.home-indicator {
    width: 462px;
    height: 15px;
    margin: 9px auto 0;
    border-radius: 8px;
    background-color: black;
}
```
